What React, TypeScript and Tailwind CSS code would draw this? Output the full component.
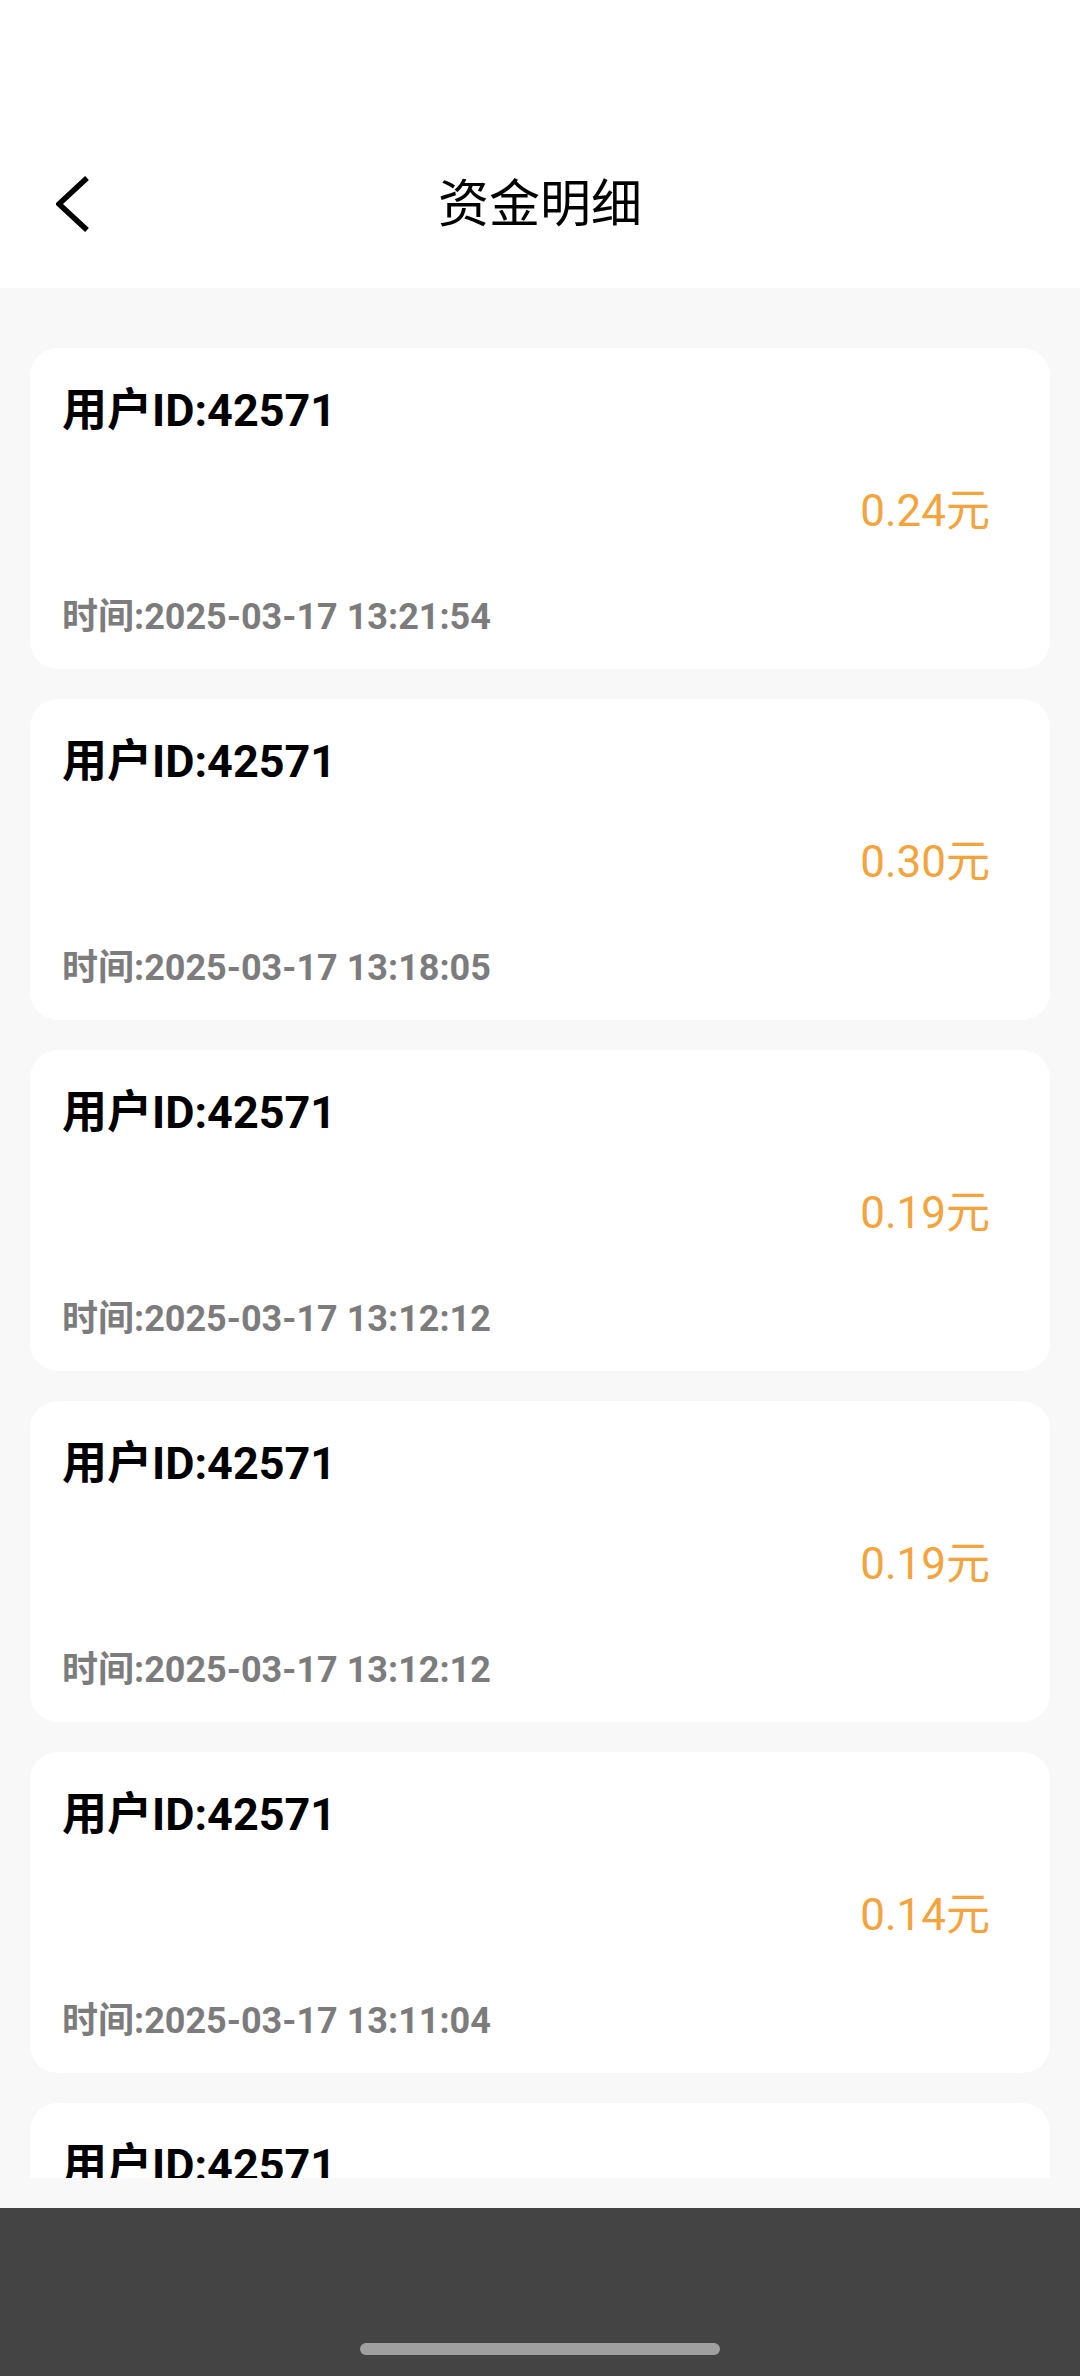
import React from "react";

const items = [
  { amount: "0.24元", time: "2025-03-17 13:21:54" },
  { amount: "0.30元", time: "2025-03-17 13:18:05" },
  { amount: "0.19元", time: "2025-03-17 13:12:12" },
  { amount: "0.19元", time: "2025-03-17 13:12:12" },
  { amount: "0.14元", time: "2025-03-17 13:11:04" },
  { amount: "0.14元", time: "2025-03-17 13:11:04" },
];

const font = { fontFamily: 'Roboto, "Noto Sans CJK SC", sans-serif' };

function Card({ amount, time }: { amount: string; time: string }) {
  return (
    <div className="shrink-0 h-[321px] bg-white rounded-[28px] pl-[32px] pt-[40px] flex flex-col">
      <div className="text-[45px] leading-[45px] font-bold text-black">用户ID:42571</div>
      <div className="mt-[56px] pr-[60px] flex justify-end text-[44px] leading-[44px] text-[#F5A33C]">
        {amount}
      </div>
      <div className="mt-[66px] text-[36px] leading-[36px] font-bold text-[#7c7c7c]">时间:{time}</div>
    </div>
  );
}

export default function App() {
  return (
    <div className="w-[1080px] h-[2376px] flex flex-col bg-[#f8f8f8] overflow-hidden" style={font}>
      <div className="h-[288px] shrink-0 bg-white flex flex-col">
        <div className="mt-[146px] h-[116px] grid grid-cols-[1fr_auto_1fr] items-center">
          <div className="pl-[56px] flex items-center">
            <svg width="36" height="58" viewBox="0 0 36 58" fill="none">
              <polyline points="31,3 3,29 31,55" stroke="#000" strokeWidth="5.5" strokeLinejoin="miter" />
            </svg>
          </div>
          <div className="text-[51px] leading-[51px] text-black">资金明细</div>
          <div />
        </div>
      </div>
      <div className="h-[1890px] shrink-0 overflow-hidden px-[30px] pt-[60px] flex flex-col gap-[30px]">
        {items.map((it, i) => (
          <Card key={i} amount={it.amount} time={it.time} />
        ))}
      </div>
      <div className="h-[30px] shrink-0" />
      <div className="flex-1 bg-[#444444] flex flex-col items-center">
        <div className="mt-[135px] w-[360px] h-[12px] rounded-full bg-[#a0a0a0]" />
      </div>
    </div>
  );
}
